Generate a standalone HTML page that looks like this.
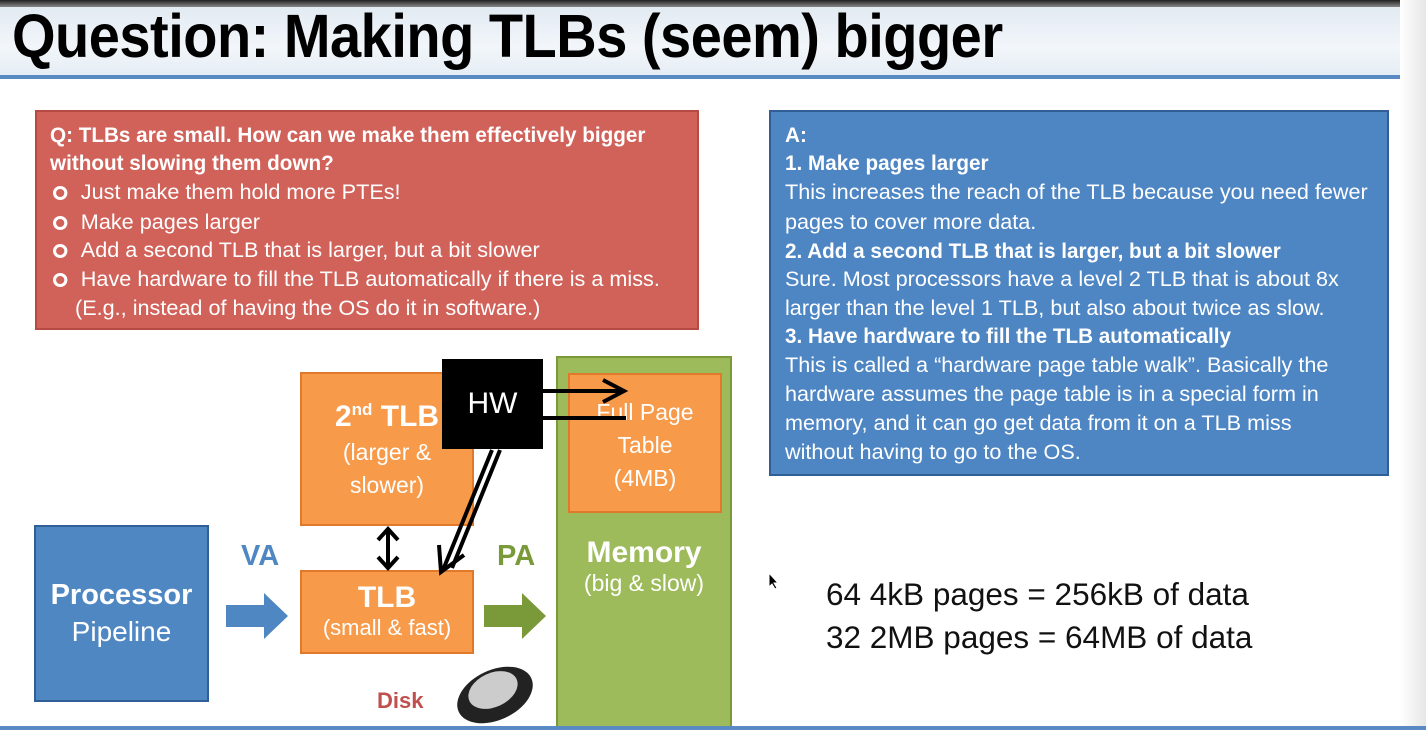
<!DOCTYPE html>
<html><head><meta charset="utf-8"><style>
*{margin:0;padding:0;box-sizing:border-box}
body{width:1426px;height:730px;overflow:hidden;position:relative;background:#fff;font-family:"Liberation Sans",sans-serif}
.a{position:absolute}
.hdr{left:0;top:0;width:1426px;height:78px;background:linear-gradient(#dfe8f1,#f2f6fa 60%,#e4ecf4)}
.topbar{left:0;top:0;width:1426px;height:7px;background:linear-gradient(#222,#888)}
.title{left:12px;top:0px;font-weight:bold;font-size:56px;color:#000;white-space:nowrap;transform:scale(1.0,1.1);transform-origin:left top;letter-spacing:-0.5px}
.bl{left:0;top:75px;width:1426px;height:4px;background:#5a8ac4}
.right{left:1400px;top:0;width:26px;height:730px;background:linear-gradient(90deg,#fff,#e6e6e6)}
.red{left:35px;top:110px;width:664px;height:220px;background:#d0625a;border:2px solid #b54a42;color:#fff}
.blue{left:769px;top:110px;width:620px;height:366px;background:#4e86c4;border:2px solid #2f5f96;color:#fff}
.t{position:absolute;white-space:nowrap;font-size:21px;transform:scaleX(1.03);transform-origin:left top}
.t.b{font-weight:bold;transform:scaleX(0.985)}
.bul{display:inline-block;width:14px;height:14px;border:3px solid #fff;border-radius:50%;margin-right:13px;vertical-align:-1px}
.or{background:#f79a4a;border:2px solid #e07a2a;color:#fff;text-align:center}
</style></head><body>
<div class="a hdr"></div>
<div class="a topbar"></div>
<div class="a title">Question: Making TLBs (seem) bigger</div>
<div class="a bl"></div>
<div class="a right"></div>

<div class="a red">
<div class="t b" style="left:13px;top:12px">Q: TLBs are small. How can we make them effectively bigger</div>
<div class="t b" style="left:13px;top:40px">without slowing them down?</div>
<div class="t" style="left:16px;top:69px"><span class="bul"></span>Just make them hold more PTEs!</div>
<div class="t" style="left:16px;top:99px"><span class="bul"></span>Make pages larger</div>
<div class="t" style="left:16px;top:127px"><span class="bul"></span>Add a second TLB that is larger, but a bit slower</div>
<div class="t" style="left:16px;top:156px"><span class="bul"></span>Have hardware to fill the TLB automatically if there is a miss.</div>
<div class="t" style="left:38px;top:185px">(E.g., instead of having the OS do it in software.)</div>
</div>

<div class="a blue">
<div class="t b" style="left:14px;top:12px">A:</div>
<div class="t b" style="left:14px;top:40px">1. Make pages larger</div>
<div class="t" style="left:14px;top:69px">This increases the reach of the TLB because you need fewer</div>
<div class="t" style="left:14px;top:99px">pages to cover more data.</div>
<div class="t b" style="left:14px;top:128px">2. Add a second TLB that is larger, but a bit slower</div>
<div class="t" style="left:14px;top:156px">Sure. Most processors have a level 2 TLB that is about 8x</div>
<div class="t" style="left:14px;top:185px">larger than the level 1 TLB, but also about twice as slow.</div>
<div class="t b" style="left:14px;top:213px">3. Have hardware to fill the TLB automatically</div>
<div class="t" style="left:14px;top:242px">This is called a “hardware page table walk”. Basically the</div>
<div class="t" style="left:14px;top:271px">hardware assumes the page table is in a special form in</div>
<div class="t" style="left:14px;top:300px">memory, and it can go get data from it on a TLB miss</div>
<div class="t" style="left:14px;top:329px">without having to go to the OS.</div>
</div>

<div class="a" style="left:34px;top:525px;width:175px;height:177px;background:#4f87c3;border:2px solid #2f5f96;color:#fff;text-align:center">
<div style="margin-top:52px;font-size:29px;font-weight:bold">Processor</div>
<div style="margin-top:4px;font-size:28px">Pipeline</div></div>

<div class="a" style="left:241px;top:540px;font-size:29px;font-weight:bold;color:#4f87c3">VA</div>
<svg class="a" style="left:226px;top:593px" width="64" height="46"><polygon points="0,12 38,12 38,0 62,23 38,46 38,34 0,34" fill="#4f87c3"/></svg>

<div class="a" style="left:497px;top:540px;font-size:29px;font-weight:bold;color:#7a9a3a">PA</div>
<svg class="a" style="left:484px;top:593px" width="64" height="46"><polygon points="0,12 38,12 38,0 62,23 38,46 38,34 0,34" fill="#7a9a3a"/></svg>

<div class="a or" style="left:300px;top:372px;width:174px;height:154px">
<div style="margin-top:26px;font-size:30px;font-weight:bold">2<sup style="font-size:17px">nd</sup> TLB</div>
<div style="font-size:23px;margin-top:2px;line-height:33px">(larger &amp;<br>slower)</div></div>

<div class="a or" style="left:300px;top:570px;width:174px;height:84px">
<div style="margin-top:9px;font-size:30px;font-weight:bold">TLB</div>
<div style="font-size:22px">(small &amp; fast)</div></div>

<div class="a" style="left:556px;top:356px;width:176px;height:374px;background:#9ebb5c;border:2px solid #7a9a3a;color:#fff;text-align:center">
<div style="margin-top:178px;font-size:30px;font-weight:bold">Memory</div>
<div style="font-size:23px">(big &amp; slow)</div></div>

<div class="a or" style="left:568px;top:373px;width:154px;height:140px;font-size:23px;line-height:33px;padding-top:21px">Full Page<br>Table<br>(4MB)</div>

<div class="a" style="left:442px;top:359px;width:101px;height:90px;background:#000;color:#fff;font-size:30px;text-align:center;line-height:90px">HW</div>

<svg class="a" style="left:0;top:0" width="1426" height="730">
<g stroke="#000" stroke-width="4" fill="none">
<line x1="543" y1="391" x2="622" y2="391"/><polyline points="603,380 624,391 603,402"/>
<line x1="543" y1="418" x2="626" y2="418"/>
<line x1="492" y1="450" x2="443" y2="570"/><line x1="500" y1="450" x2="452" y2="568"/>
<polyline points="439,545 441,572 464,555"/>
<line x1="388" y1="530" x2="388" y2="568"/><polyline points="378,540 388,529 398,540"/><polyline points="378,557 388,568 398,557"/>
</g>
<ellipse cx="495" cy="695" rx="40" ry="25" fill="#222" transform="rotate(-25 495 695)"/>
<ellipse cx="493" cy="690" rx="26" ry="17" fill="#ccc" transform="rotate(-25 493 690)"/>
</svg>
<div class="a" style="left:377px;top:688px;font-size:22px;font-weight:bold;color:#c0504d">Disk</div>

<div class="a" style="left:826px;top:573px;font-size:31.5px;color:#111;white-space:nowrap;line-height:43px">64 4kB pages = 256kB of data<br>32 2MB pages = 64MB of data</div>
<svg class="a" style="left:768px;top:572px" width="12" height="18"><polygon points="1,1 1,15 4,12 7,17 9,16 6,11 10,11" fill="#000" stroke="#fff" stroke-width="1"/></svg>

<div class="a" style="left:0;top:726px;width:1426px;height:4px;background:#5a8ac4"></div>
</body></html>
